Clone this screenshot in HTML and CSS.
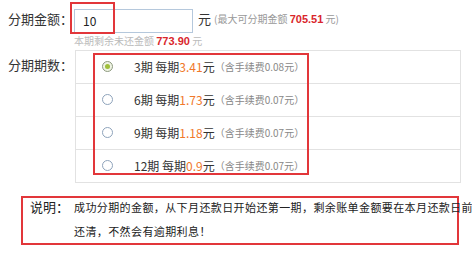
FILE: index.html
```html
<!DOCTYPE HTML>
<html>
<head>
<title>分期</title>
<link rel="stylesheet" href="styles.css">
</head>
<body>
<div class="page">
    <div class="row amount">
        <label class="lbl">分期金额：</label>
        <div class="field">
            <input class="money" value="10"/>
            <span class="mark mark-input"></span>
        </div>
        <span class="unit">元</span>
        <span class="tip">(最大可分期金额 <b>705.51</b> 元)</span>
    </div>
    <div class="remain">本期剩余未还金额 <b>773.90</b> 元</div>

    <div class="row periods">
        <label class="lbl">分期期数：</label>
        <div class="plans">
            <div class="plan"><span class="radio on"></span>3期 每期<em>3.41</em>元<small>（含手续费0.08元）</small></div>
            <div class="plan"><span class="radio"></span>6期 每期<em>1.73</em>元<small>（含手续费0.07元）</small></div>
            <div class="plan"><span class="radio"></span>9期 每期<em>1.18</em>元<small>（含手续费0.07元）</small></div>
            <div class="plan"><span class="radio"></span>12期 每期<em>0.9</em>元<small>（含手续费0.07元）</small></div>
            <span class="mark mark-plans"></span>
        </div>
    </div>

    <div class="note">
        <span class="note-lbl">说明：</span>
        <p>成功分期的金额，从下月还款日开始还第一期，剩余账单金额要在本月还款日前<br>还清，不然会有逾期利息！</p>
    </div>
</div>
</body>
</html>
```
FILE: styles.css
```css
body {margin: 0; font-family: "Noto Sans CJK SC", "Microsoft YaHei", sans-serif; color: #333; background: #fff;}
.page {padding: 7px 0 0 0;}
.row {display: flex; align-items: flex-start;}
.lbl {width: 74px; box-sizing: border-box; padding-left: 8px; font-size: 13px; color: #333; line-height: 24px;}

.field {position: relative;}
.money {width: 119px; height: 24px; box-sizing: border-box; border: 1px solid #b5c8dc; padding: 0 8px; font: 12px "Noto Sans CJK SC", sans-serif; color: #222; outline: none;}
.mark {position: absolute; border: 2px solid #e2363a; box-sizing: border-box;}
.mark-input {left: -4px; top: -5px; width: 45px; height: 32px;}
.unit {font-size: 13px; line-height: 24px; margin-left: 5px;}
.tip {font-size: 10px; color: #999; line-height: 24px; margin-left: 3px;}
.tip b, .remain b {color: #d9262c; font-family: "Liberation Sans", Arial, sans-serif; font-size: 11px;}

.remain {margin: 1px 0 0 74px; font-size: 10px; color: #bbb; line-height: 14px;}

.periods {margin-top: 2px;}
.periods .lbl {padding-top: 3px;}
.plans {position: relative; width: 386px; border: 1px solid #e2e2e2; box-sizing: border-box; margin-left: 1px;}
.plan {display: flex; align-items: center; height: 32px; border-top: 1px solid #e2e2e2; font-size: 12px; color: #333;}
.plan:first-child {border-top: 0;}
.plan em {font-style: normal; color: #f0782a;}
.plan small {font-size: 10px; color: #888;}
.radio {width: 9px; height: 9px; border: 1px solid #8ea3bb; border-radius: 50%; margin: 0 21px 0 26px; position: relative; background: #fff;}
.radio.on {border-color: #8e9a80; background: #eef3e2;}
.radio.on::after {content: ""; position: absolute; left: 2px; top: 2px; width: 5px; height: 5px; border-radius: 50%; background: #9fbf3a;}
.mark-plans {left: 17px; top: 2px; width: 216px; height: 122px;}

.note {display: flex; margin: 13px 0 0 21px; width: 438px; height: 49px; box-sizing: border-box; border: 2px solid #e2363a; padding: 0 0 0 7px; font-size: 11px; line-height: 24px; color: #222;}
.note-lbl {width: 44px; flex: none; font-size: 13px; margin-top: -3px;}
.note p {margin: -3px 0 0 0; white-space: nowrap; letter-spacing: 0.4px;}
```
